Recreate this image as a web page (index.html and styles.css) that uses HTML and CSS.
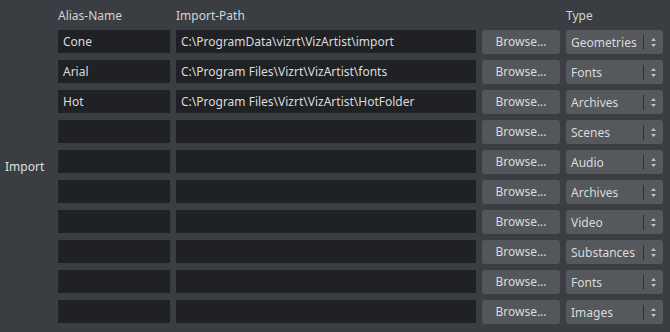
FILE: index.html
```html
<!DOCTYPE html>
<html>
<head>
<meta charset="utf-8">
<link rel="stylesheet" href="styles.css">
</head>
<body>
<div class="panel">
  <div class="side"><span class="side-label">Import</span></div>
  <div class="grid">
    <div class="hdr">Alias-Name</div>
    <div class="hdr">Import-Path</div>
    <div class="hdr"></div>
    <div class="hdr">Type</div>

    <div class="field">Cone</div>
    <div class="field">C:\ProgramData\vizrt\VizArtist\import</div>
    <div class="btn">Browse...</div>
    <div class="combo"><span class="combo-text">Geometries</span><span class="sep"></span><span class="arrows"><svg width="7" height="11" viewBox="0 0 7 11"><path d="M3.5 1 L6 4 L1 4 Z M1 7 L6 7 L3.5 10 Z" fill="#bfc1c4"/></svg></span></div>

    <div class="field">Arial</div>
    <div class="field">C:\Program Files\Vizrt\VizArtist\fonts</div>
    <div class="btn">Browse...</div>
    <div class="combo"><span class="combo-text">Fonts</span><span class="sep"></span><span class="arrows"><svg width="7" height="11" viewBox="0 0 7 11"><path d="M3.5 1 L6 4 L1 4 Z M1 7 L6 7 L3.5 10 Z" fill="#bfc1c4"/></svg></span></div>

    <div class="field">Hot</div>
    <div class="field">C:\Program Files\Vizrt\VizArtist\HotFolder</div>
    <div class="btn">Browse...</div>
    <div class="combo"><span class="combo-text">Archives</span><span class="sep"></span><span class="arrows"><svg width="7" height="11" viewBox="0 0 7 11"><path d="M3.5 1 L6 4 L1 4 Z M1 7 L6 7 L3.5 10 Z" fill="#bfc1c4"/></svg></span></div>

    <div class="field"></div>
    <div class="field"></div>
    <div class="btn">Browse...</div>
    <div class="combo"><span class="combo-text">Scenes</span><span class="sep"></span><span class="arrows"><svg width="7" height="11" viewBox="0 0 7 11"><path d="M3.5 1 L6 4 L1 4 Z M1 7 L6 7 L3.5 10 Z" fill="#bfc1c4"/></svg></span></div>

    <div class="field"></div>
    <div class="field"></div>
    <div class="btn">Browse...</div>
    <div class="combo"><span class="combo-text">Audio</span><span class="sep"></span><span class="arrows"><svg width="7" height="11" viewBox="0 0 7 11"><path d="M3.5 1 L6 4 L1 4 Z M1 7 L6 7 L3.5 10 Z" fill="#bfc1c4"/></svg></span></div>

    <div class="field"></div>
    <div class="field"></div>
    <div class="btn">Browse...</div>
    <div class="combo"><span class="combo-text">Archives</span><span class="sep"></span><span class="arrows"><svg width="7" height="11" viewBox="0 0 7 11"><path d="M3.5 1 L6 4 L1 4 Z M1 7 L6 7 L3.5 10 Z" fill="#bfc1c4"/></svg></span></div>

    <div class="field"></div>
    <div class="field"></div>
    <div class="btn">Browse...</div>
    <div class="combo"><span class="combo-text">Video</span><span class="sep"></span><span class="arrows"><svg width="7" height="11" viewBox="0 0 7 11"><path d="M3.5 1 L6 4 L1 4 Z M1 7 L6 7 L3.5 10 Z" fill="#bfc1c4"/></svg></span></div>

    <div class="field"></div>
    <div class="field"></div>
    <div class="btn">Browse...</div>
    <div class="combo"><span class="combo-text">Substances</span><span class="sep"></span><span class="arrows"><svg width="7" height="11" viewBox="0 0 7 11"><path d="M3.5 1 L6 4 L1 4 Z M1 7 L6 7 L3.5 10 Z" fill="#bfc1c4"/></svg></span></div>

    <div class="field"></div>
    <div class="field"></div>
    <div class="btn">Browse...</div>
    <div class="combo"><span class="combo-text">Fonts</span><span class="sep"></span><span class="arrows"><svg width="7" height="11" viewBox="0 0 7 11"><path d="M3.5 1 L6 4 L1 4 Z M1 7 L6 7 L3.5 10 Z" fill="#bfc1c4"/></svg></span></div>

    <div class="field"></div>
    <div class="field"></div>
    <div class="btn">Browse...</div>
    <div class="combo"><span class="combo-text">Images</span><span class="sep"></span><span class="arrows"><svg width="7" height="11" viewBox="0 0 7 11"><path d="M3.5 1 L6 4 L1 4 Z M1 7 L6 7 L3.5 10 Z" fill="#bfc1c4"/></svg></span></div>
  </div>
</div>
</body>
</html>
```
FILE: styles.css
```css
html, body {
  margin: 0;
  padding: 0;
  background: #3a3d41;
  width: 670px;
  height: 332px;
  overflow: hidden;
}
body {
  font-family: "Noto Sans", "Liberation Sans", sans-serif;
  font-size: 12px;
  color: #dadbdc;
}
.panel {
  display: flex;
  height: 332px;
}
.side {
  width: 58px;
  display: flex;
  align-items: center;
}
.side-label {
  padding-left: 5px;
  color: #dfe0e1;
}
.grid {
  display: grid;
  grid-template-columns: 112px 300px 78px 97px;
  grid-template-rows: 24px repeat(10, 24px);
  column-gap: 6px;
  row-gap: 6px;
  align-content: start;
}
.hdr {
  padding-top: 7px;
  line-height: 18px;
  height: 24px;
  box-sizing: border-box;
  color: #d3d4d5;
  white-space: nowrap;
}
.field {
  background: #1f2125;
  height: 23px;
  line-height: 23px;
  padding-left: 5px;
  white-space: nowrap;
  overflow: hidden;
}
.btn {
  background: #53565a;
  border-radius: 3px;
  height: 24px;
  line-height: 24px;
  text-align: center;
}
.combo {
  background: #55585c;
  border-radius: 3px;
  height: 24px;
  display: flex;
  align-items: center;
  padding-left: 5px;
}
.combo-text {
  flex: 1;
  white-space: nowrap;
}
.sep {
  width: 1px;
  height: 15px;
  background: #2e3033;
  margin-right: 6px;
}
.arrows {
  width: 13px;
  display: flex;
  align-items: center;
}
.arrows svg {
  display: block;
}
```
